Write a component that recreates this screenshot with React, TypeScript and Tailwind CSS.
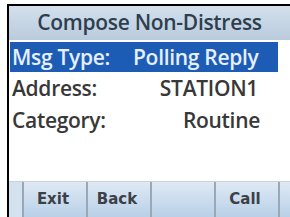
// Compose Non-Distress screen (radio DSC menu)

const font = { fontFamily: '"Open Sans", "Noto Sans", sans-serif' };
const softKeyFont = { fontFamily: '"DejaVu Sans", Verdana, sans-serif' };

export default function App() {
  return (
    <div className="flex h-[217px] w-[290px] flex-col overflow-hidden bg-white pl-[7px] pt-[4px]" style={font}>
      <div className="flex flex-1 flex-col border-l-2 border-t-2 border-black">
        <div className="flex h-[34px] items-center justify-center bg-gradient-to-b from-[#d3e0ec] to-[#b9cbdc] text-[21px] font-semibold tracking-[-0.3px] text-[#2e3e4f]">
          Compose Non-Distress
        </div>
        <div className="mt-[2px] flex flex-col pr-[12px] text-[21px] font-semibold leading-none tracking-[-0.3px]">
          <div className="ml-[1px] flex h-[30px] items-center bg-[#1d5cb4] pl-[2px] text-[#e6efff]">
            <span className="w-[121px]">Msg Type:</span>
            <span>Polling Reply</span>
          </div>
          <div className="flex h-[32px] items-center justify-between pl-[3px] pr-[20px] text-[#383838]">
            <span>Address:</span>
            <span>STATION1</span>
          </div>
          <div className="flex h-[32px] items-center justify-between pl-[3px] pr-[18px] text-[#383838]">
            <span>Category:</span>
            <span>Routine</span>
          </div>
        </div>
        <div className="flex-1" />
        <div className="flex h-[36px] border-t border-[#c9d3dc] bg-gradient-to-b from-[#dfe9f3] to-[#b9d0e8] text-[15px] font-bold text-[#3c4148]" style={softKeyFont}>
          <div className="w-[13px] bg-[#d4e2ef]" />
          {["Exit", "Back", "", "Call"].map((label, i) => (
            <div key={i} className="flex w-[64px] items-center justify-center border-l-2 border-[#98a8b8] pr-[4px]">
              {label}
            </div>
          ))}
          <div className="flex-1 border-l-2 border-[#98a8b8]" />
        </div>
      </div>
    </div>
  );
}
